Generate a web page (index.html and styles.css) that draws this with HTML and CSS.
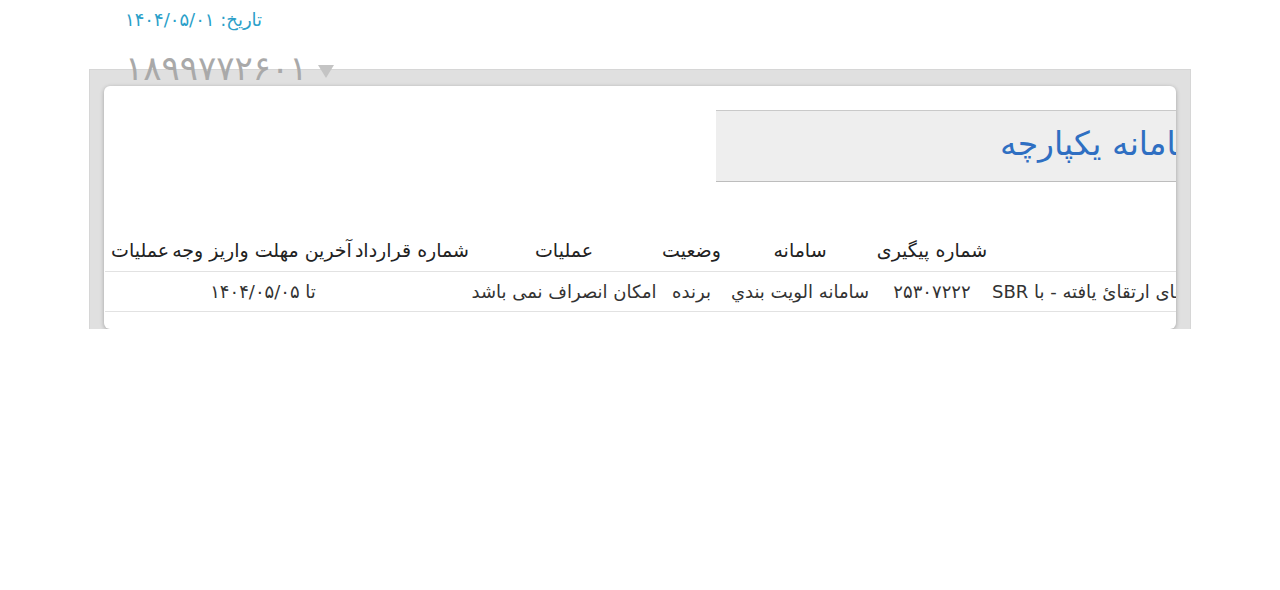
FILE: index.html
```html
<!DOCTYPE html>
<html lang="fa">
<head>
<meta charset="utf-8">
<title>سامانه یکپارچه</title>
<link rel="stylesheet" href="styles.css">
</head>
<body>
<div class="page">
  <div class="head">
    <div class="date" dir="rtl">تاریخ: ۱۴۰۴/۰۵/۰۱</div>
    <div class="account">
      <span class="acc-num">۱۸۹۹۷۷۲۶۰۱</span>
      <svg class="caret" width="18" height="16" viewBox="0 0 18 16"><polygon points="1,2 17,2 9,15" fill="#c4c4c4"/></svg>
    </div>
  </div>
  <div class="frame">
    <div class="card" dir="rtl">
      <div class="inner">
        <div class="title-box"><span class="title">سامانه یکپارچه</span></div>
        <div class="row row-head">
          <div class="cell w222"></div>
          <div class="cell w104">شماره پیگیری</div>
          <div class="cell w160">سامانه</div>
          <div class="cell w57">وضعیت</div>
          <div class="cell w198">عملیات</div>
          <div class="cell-group">
            <span>شماره قرارداد</span>
            <span>آخرین مهلت واریز وجه</span>
            <span>عملیات</span>
          </div>
        </div>
        <div class="row row-data">
          <div class="cell w222 cell-end">سامانه کالاهای ارتقائ یافته - با SBR</div>
          <div class="cell w104">۲۵۳۰۷۲۲۲</div>
          <div class="cell w160">سامانه الويت بندي</div>
          <div class="cell w57">برنده</div>
          <div class="cell w198">امکان انصراف نمی باشد</div>
          <div class="cell w101"></div>
          <div class="cell w202">تا ۱۴۰۴/۰۵/۰۵</div>
          <div class="cell w50"></div>
        </div>
      </div>
    </div>
  </div>
</div>
</body>
</html>
```
FILE: styles.css
```css
html, body {
  margin: 0;
  padding: 0;
  background: #ffffff;
}
body {
  font-family: "DejaVu Sans", "Noto Sans", sans-serif;
  color: #333;
}
.page {
  width: 1102px;
  margin-left: 89px;
}
.head {
  display: flex;
  flex-direction: column;
  align-items: flex-start;
  padding-left: 36px;
  padding-top: 6px;
}
.date {
  color: #2b9fc9;
  font-size: 18px;
  line-height: 28px;
}
.account {
  display: flex;
  align-items: center;
  gap: 9px;
  margin-top: 14px;
  height: 40px;
  margin-bottom: -19px;
  position: relative;
  z-index: 1;
}
.acc-num {
  color: #a9a9a9;
  font-size: 34px;
  line-height: 40px;
}
.caret {
  margin-top: 6px;
}
.frame {
  background: #e0e0e0;
  border: 1px solid #d6d6d6;
  border-bottom: none;
  padding: 16px 14px 0;
}
.card {
  background: #fff;
  height: 243px;
  border-radius: 6px;
  box-shadow: 0 1px 4px rgba(0, 0, 0, 0.28);
  overflow: hidden;
}
.inner {
  margin-right: -30px;
  padding-top: 24px;
}
.title-box {
  height: 70px;
  margin-left: auto;
  background: #eeeeee;
  border-top: 1px solid #c9c9c9;
  border-bottom: 1px solid #bdbdbd;
  display: flex;
  align-items: center;
  justify-content: flex-end;
  padding-left: 284px;
  box-sizing: content-box;
  width: 206px;
}
.title {
  color: #2f6fc2;
  font-size: 33px;
  white-space: nowrap;
  line-height: 40px;
  margin-top: -4px;
}
.row {
  display: flex;
  margin-left: 1px;
  border-bottom: 1px solid #e2e2e2;
  height: 39px;
  align-items: center;
}
.row-head {
  margin-top: 50px;
  color: #222;
  font-size: 19px;
}
.row-head > * {
  margin-top: -3px;
}
.row-data {
  color: #333;
  font-size: 18px;
}
.cell {
  flex: none;
  display: flex;
  justify-content: center;
  white-space: nowrap;
}
.cell-end {
  justify-content: flex-end;
  padding-left: 8px;
  box-sizing: border-box;
}
.cell-group {
  flex: 1;
  display: flex;
  justify-content: flex-start;
  gap: 3px;
  margin-right: -4px;
  white-space: nowrap;
}
.w222 { width: 222px; }
.w104 { width: 104px; }
.w160 { width: 160px; }
.w57 { width: 57px; }
.w198 { width: 198px; }
.w101 { width: 101px; }
.w202 { width: 202px; }
.w50 { width: 50px; }
```
